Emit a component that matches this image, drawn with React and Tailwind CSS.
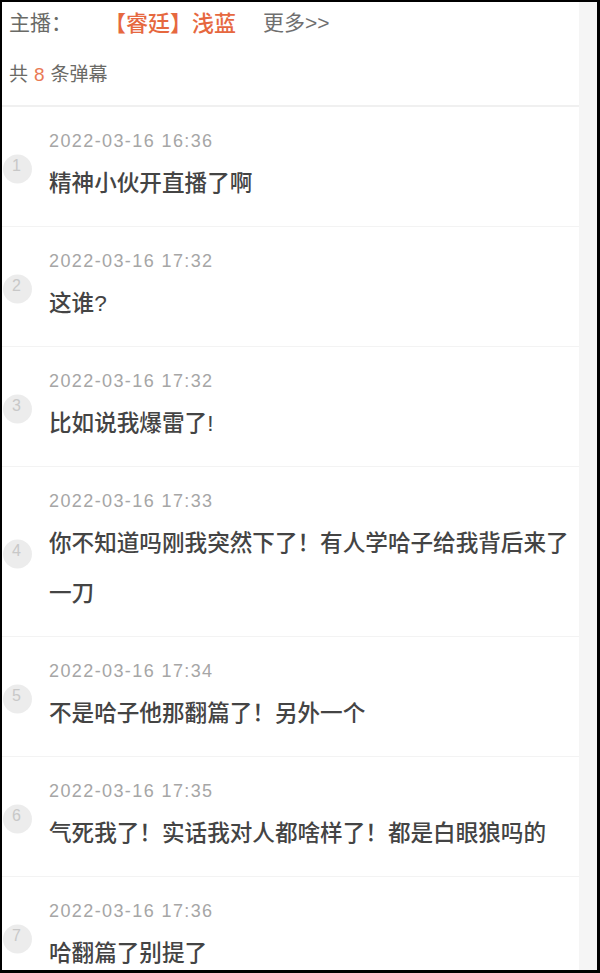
// Danmaku (bullet comment) list for a streamer, mobile layout

const comments = [
  { time: '2022-03-16 16:36', text: '精神小伙开直播了啊' },
  { time: '2022-03-16 17:32', text: '这谁?' },
  { time: '2022-03-16 17:32', text: '比如说我爆雷了!' },
  { time: '2022-03-16 17:33', text: '你不知道吗刚我突然下了！有人学哈子给我背后来了一刀' },
  { time: '2022-03-16 17:34', text: '不是哈子他那翻篇了！另外一个' },
  { time: '2022-03-16 17:35', text: '气死我了！实话我对人都啥样了！都是白眼狼吗的' },
  { time: '2022-03-16 17:36', text: '哈翻篇了别提了' },
]

function CommentRow({ index, time, text }) {
  return (
    <div
      className={`relative pl-[47px] pr-[10px] pt-[19px] pb-[17px] ${
        index > 1 ? 'border-t border-[#f3f3f3]' : ''
      }`}
    >
      {/* Index bubble, vertically centred on the row */}
      <div className="absolute left-px top-1/2 -translate-y-1/2 mt-[2px] w-[29px] h-[29px] rounded-full bg-[#ececec]">
        <span className="absolute left-[9px] top-0 text-[16px] leading-[22px] text-[#c8c8c8]">
          {index}
        </span>
      </div>
      <div className="text-[18px] leading-[30px] tracking-[1.4px] text-[#a6a6a6]">{time}</div>
      <div className="mt-[3px] text-[22.6px] leading-[50px] font-medium text-[#444444]">
        {text}
      </div>
    </div>
  )
}

export default function App() {
  return (
    <div
      className="h-[973px] overflow-hidden border-l-2 border-t-2 border-r-[3px] border-b-[3px] border-black bg-white"
      style={{ fontFamily: '"Liberation Sans", "Noto Sans CJK SC", sans-serif' }}
    >
      <div className="flex h-full">
        <div className="flex-1 min-w-0">
          {/* Header - streamer name and total count */}
          <div className="pt-[6px] pb-[15px] pl-[7px] border-b-2 border-[#f0f0f0]">
            <div className="flex items-center h-[30px]">
              <span className="text-[21px] text-[#6a6a66]">主播：</span>
              <span className="ml-[32px] text-[22px] font-medium text-[#e6683f]">【睿廷】浅蓝</span>
              <span className="ml-[27px] text-[21px] text-[#6f6f6f]">更多&gt;&gt;</span>
            </div>
            <div className="mt-[22px] flex items-center h-[30px] text-[19px] text-[#6a6a66]">
              <span>共</span>
              <span className="mx-[6px] text-[#e97a55]">8</span>
              <span>条弹幕</span>
            </div>
          </div>

          {comments.map((c, i) => (
            <CommentRow key={i} index={i + 1} time={c.time} text={c.text} />
          ))}
        </div>
        {/* Scrollbar track */}
        <div className="w-[18px] shrink-0 bg-[#f5f5f5]" />
      </div>
    </div>
  )
}
